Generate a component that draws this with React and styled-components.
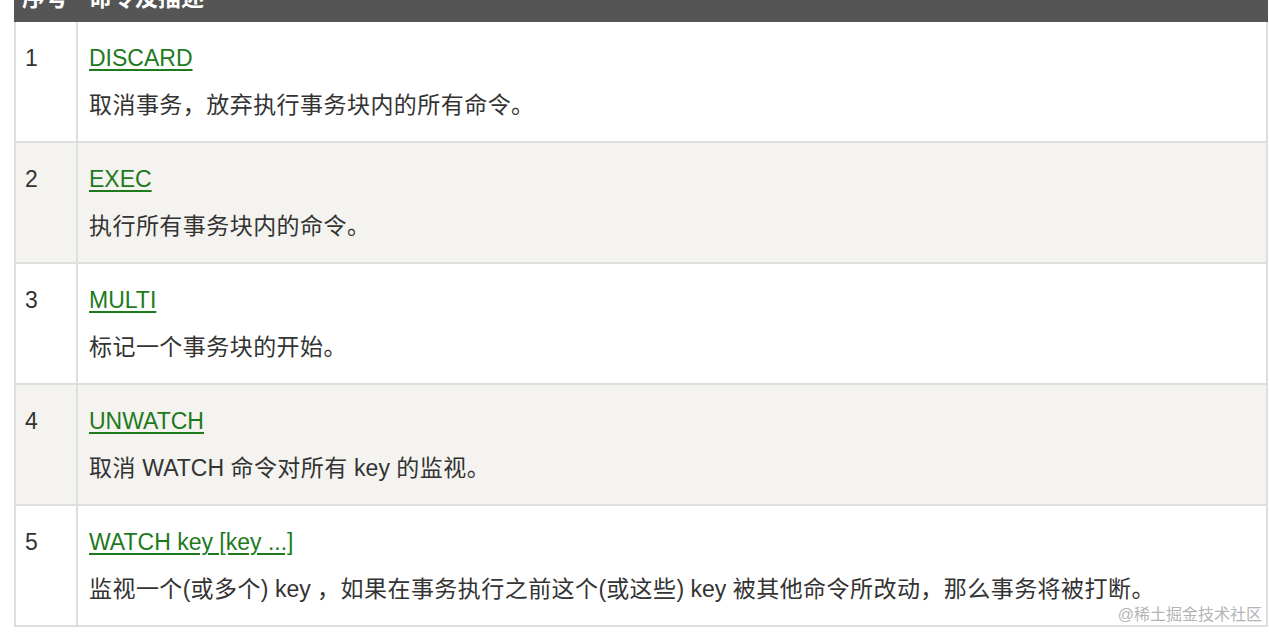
import React from 'react';
import styled, { createGlobalStyle } from 'styled-components';

const GlobalStyle = createGlobalStyle`
  html, body {
    margin: 0;
    padding: 0;
    background: #fff;
    overflow: hidden;
  }
  body {
    font-family: 'Liberation Sans', Arial, 'Noto Sans CJK SC', sans-serif;
  }
`;

const Page = styled.div`
  position: relative;
  width: 1269px;
  height: 636px;
  overflow: hidden;
`;

// the page is scrolled a little, so the header row is cut at the top
const Table = styled.div`
  margin: -26px 0 0 14px;
  width: 1254px;
  border-left: 2px solid #dedede;
  border-right: 2px solid #dedede;
  box-sizing: border-box;
  font-size: 23px;
  color: #333;
`;

const Row = styled.div`
  display: grid;
  grid-template-columns: 62px 1fr;
  background: ${({ $alt }) => ($alt ? '#f4f3ef' : '#fff')};
  border-bottom: 2px solid #dedede;
`;

const HeadRow = styled(Row)`
  background: #555;
  border-bottom: none;
  margin: 0 -2px;
  padding: 0 2px;
  height: 48px;
  align-items: center;
`;

const HeadCell = styled.div`
  color: #fff;
  font-weight: bold;
  line-height: 28px;
  padding-left: ${({ $first }) => ($first ? '6px' : '11px')};
  border-right: ${({ $first }) => ($first ? '2px solid transparent' : 'none')};
`;

const NumCell = styled.div`
  padding: 22px 0 22px 9px;
  line-height: 28px;
  border-right: 2px solid #dedede;
`;

const DescCell = styled.div`
  padding: 22px 11px;
  display: flex;
  flex-direction: column;
  gap: 19px;
  line-height: 28px;
`;

const CmdLink = styled.a`
  color: #1d7a1d;
  text-decoration: underline;
  text-underline-offset: 3px;
  text-decoration-thickness: 2px;
  align-self: flex-start;
`;

const Desc = styled.div`
  white-space: nowrap;
`;

// the reference's CJK glyphs run a touch wider than Noto's
const Cjk = styled.span`
  letter-spacing: 0.45px;
`;

const Watermark = styled.div`
  position: absolute;
  right: 7px;
  bottom: 11px;
  font-size: 16px;
  line-height: 20px;
  color: #b4b4b4;
`;

const commands = [
  { cmd: 'DISCARD', desc: '取消事务，放弃执行事务块内的所有命令。' },
  { cmd: 'EXEC', desc: '执行所有事务块内的命令。' },
  { cmd: 'MULTI', desc: '标记一个事务块的开始。' },
  { cmd: 'UNWATCH', desc: '取消 WATCH 命令对所有 key 的监视。' },
  {
    cmd: 'WATCH key [key ...]',
    desc: '监视一个(或多个) key ，如果在事务执行之前这个(或这些) key 被其他命令所改动，那么事务将被打断。',
  },
];

const splitCjk = (text) =>
  text.split(/([\u3000-\u303f\u4e00-\u9fff\uff00-\uffef]+)/).map((part, i) =>
    /[\u3000-\u303f\u4e00-\u9fff\uff00-\uffef]/.test(part) ? <Cjk key={i}>{part}</Cjk> : part
  );

const App = () => (
  <Page>
    <GlobalStyle />
    <Table>
      <HeadRow>
        <HeadCell $first>序号</HeadCell>
        <HeadCell>命令及描述</HeadCell>
      </HeadRow>
      {commands.map((c, i) => (
        <Row key={c.cmd} $alt={i % 2 === 1}>
          <NumCell>{i + 1}</NumCell>
          <DescCell>
            <CmdLink href="#">{c.cmd}</CmdLink>
            <Desc>{splitCjk(c.desc)}</Desc>
          </DescCell>
        </Row>
      ))}
    </Table>
    <Watermark>@稀土掘金技术社区</Watermark>
  </Page>
);

export default App;
